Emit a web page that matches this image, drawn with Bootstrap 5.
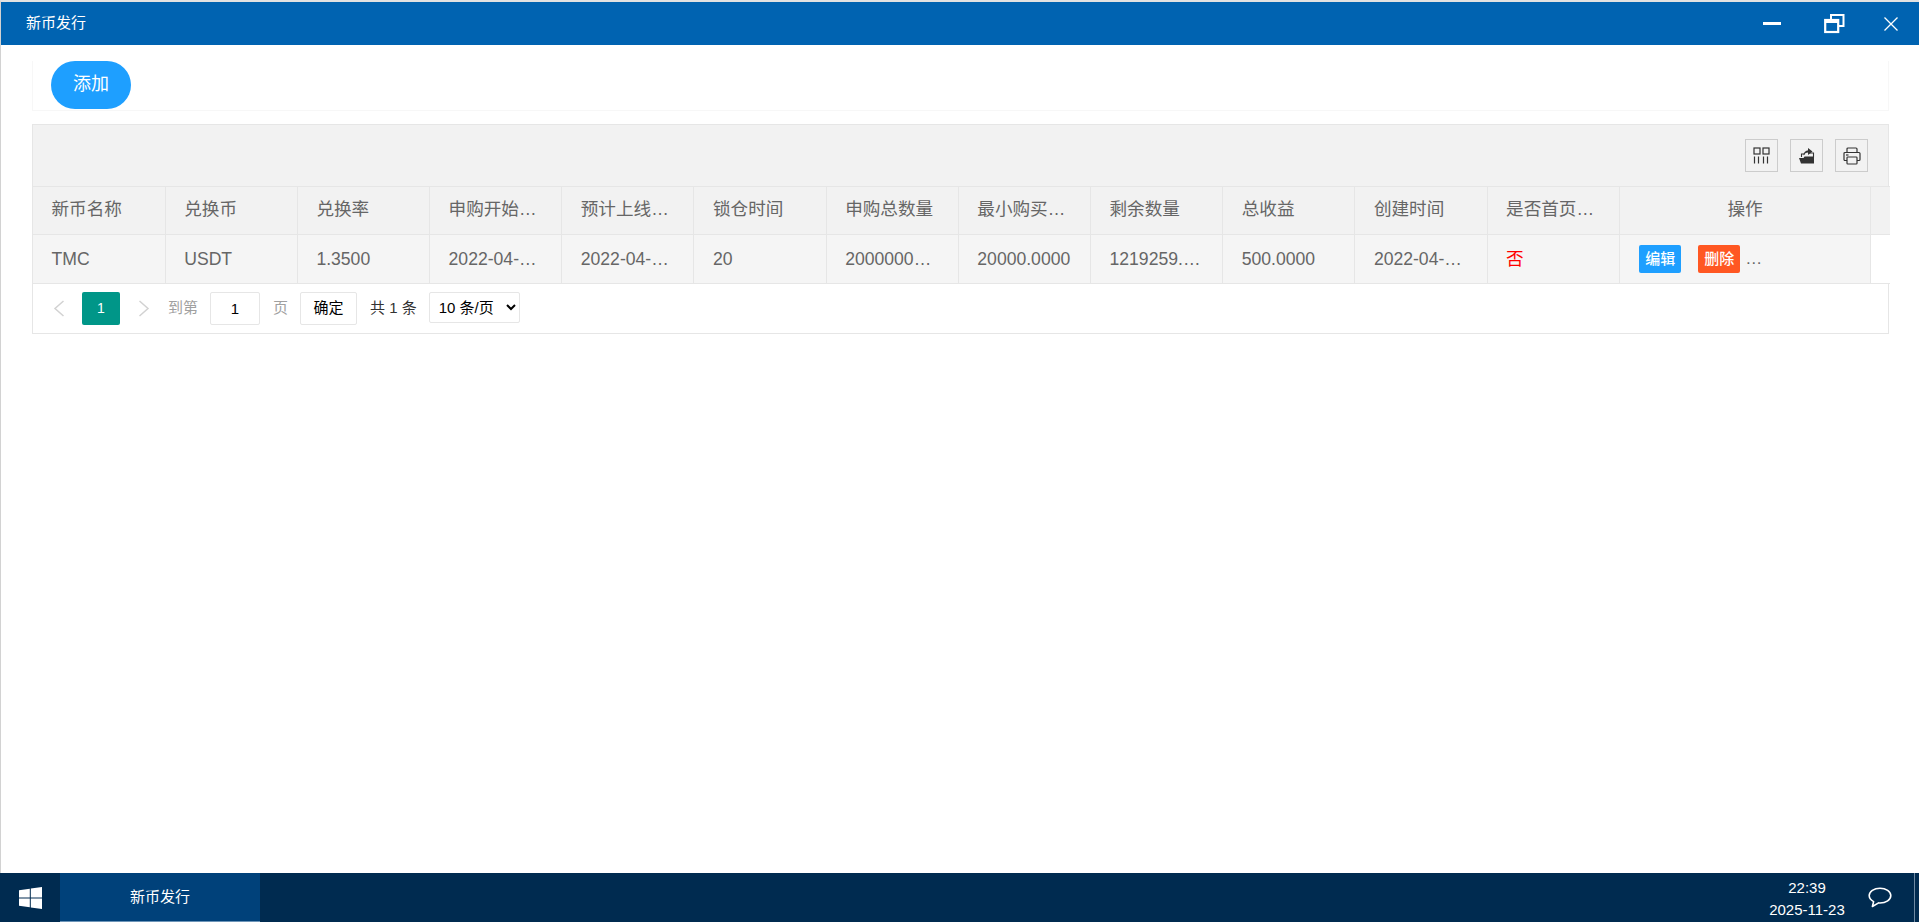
<!DOCTYPE html>
<html lang="zh-CN">
<head>
<meta charset="utf-8">
<title>新币发行</title>
<link rel="stylesheet" href="https://cdn.jsdelivr.net/npm/bootstrap@5.3.0/dist/css/bootstrap.min.css">
<style>
html,body{height:100%;margin:0;overflow:hidden;background:#fff;font-family:"Liberation Sans","Noto Sans CJK SC",sans-serif}
.desk{height:922px}
.win{border-top:2px solid #e2e2e2;border-left:1px solid #d2d2d2;min-height:0}
.win-bar{height:43px;background:#0063b1;color:#fff;font-size:15px;padding-left:25px;flex:none}
.win-ctl{width:18px;height:20px;flex:none}
.win-ctl-restore{width:21px;margin-right:-4px}
.win-ctl-close{width:14px}
.win-ctls{gap:43px;padding-right:21px}
.win-body{padding:16px 30px 0 31px}
.act-panel{height:50px;border:1px solid #f7f7f7;border-top:0;padding-left:18px}
.add-btn{width:80px;height:48px;border:0;border-radius:24px;background:#1e9fff;color:#fff;font-size:18px;padding:0 0 2px}
.grid-box{margin-top:13px;border:1px solid #e6e6e6;background:#fff}
.grid-tools{height:61px;background:#f2f2f2;gap:12px;padding-right:20px}
.tool-btn{width:33px;height:33px;border:1px solid #ccc;flex:none}
.grid-table{table-layout:fixed;width:1857px;margin:0;border-color:#e6e6e6;color:#666;font-size:17.6px}
.grid-table th,.grid-table td{padding:0 18px 0 18.500px;border:1px solid #e6e6e6;white-space:nowrap;overflow:hidden;text-overflow:ellipsis;vertical-align:middle;font-weight:400;box-shadow:none}
.grid-table th:first-child,.grid-table td:first-child{border-left:0}
.grid-table th:last-child,.grid-table td:last-child{border-right:0}
.grid-table th{height:48px;background:#f2f2f2;color:#666;padding-bottom:2px}
.grid-table td{height:49px;background:#f5f5f5;color:#666}
.grid-table td.filler{background:#fff}
.grid-table .c-std{width:132.2px}
.grid-table .c-op{width:251px}
.grid-table .no-flag{color:#f00}
.mini-btn{display:inline-block;height:28px;line-height:28px;padding:0 6px;border-radius:2px;color:#fff;font-size:15px;vertical-align:middle;font-weight:500}
.mini-edit{background:#1e9fff;margin-left:1px}
.mini-del{background:#ff5722;margin-left:17px}
.more-dots{vertical-align:middle;margin-left:5px;font-size:17px;color:#666}
.pager{height:49px;padding-left:20px;font-size:15px;color:#333}
.pg-arrow{width:12px;height:17px;flex:none}
.pg-num{width:38px;height:33px;background:#009688;color:#fff;border-radius:2px;margin:0 18px 0 17px;font-size:14px}
.pg-hint{color:#a0a0a0}
.pg-to{margin-left:18px}
.pg-input{width:50px;height:33px;border:1px solid #e6e6e6;border-radius:2px;text-align:center;margin:0 13px 0 12px;color:#000;font-size:15px;background:#fff;line-height:31px}
.pg-ok{width:57px;height:33px;border:1px solid #e6e6e6;border-radius:2px;margin:0 13px 0 12px;color:#000;background:#fff;font-size:15px;padding:0}
.pg-size{width:91px;height:31px;border:1px solid #e6e6e6;border-radius:2px;margin:0 0 2px 12px;font-size:15px;color:#000;background:#fff;padding:0 0 0 5px;font-family:inherit}
.taskbar{height:49px;background:#002b50;color:#fff;flex:none}
.start-zone{width:60px}
.task-tab{width:200px;background:#00417a;border-bottom:1px solid #6d95b8;font-size:15px}
.clock{font-size:15px;line-height:22px;width:100px;text-align:center;margin-right:11px;padding-top:2px}
.chat-ico{width:24px;height:21px;margin-right:22px;flex:none}
.show-desk{width:1px;height:100%;background:#6f8aa3;margin-right:4px}
</style>
</head>
<body>
<div class="desk d-flex flex-column">
  <div class="win flex-grow-1 d-flex flex-column">
    <div class="win-bar d-flex align-items-center justify-content-between">
      <span>新币发行</span>
      <div class="win-ctls d-flex align-items-center">
        <svg class="win-ctl" viewBox="0 0 18 20"><rect x="0" y="8" width="18" height="3" fill="#fff"/></svg>
        <svg class="win-ctl win-ctl-restore" viewBox="0 0 21 20"><path d="M7 5V1h12.500V12H15" fill="none" stroke="#fff" stroke-width="2"/><rect x="1.200" y="6" width="13" height="12" fill="none" stroke="#fff" stroke-width="2.200"/><rect x="1" y="5.500" width="13.500" height="3.500" fill="#fff"/></svg>
        <svg class="win-ctl win-ctl-close" viewBox="0 0 14 20"><path d="M.5 3.500l13 13M13.500 3.500l-13 13" stroke="#fff" stroke-width="1.300" fill="none"/></svg>
      </div>
    </div>
    <div class="win-body flex-grow-1">
      <div class="act-panel"><button type="button" class="add-btn">添加</button></div>
      <div class="grid-box">
        <div class="grid-tools d-flex align-items-center justify-content-end">
          <div class="tool-btn d-flex align-items-center justify-content-center">
            <svg width="17" height="17" viewBox="0 0 17 17" fill="none" stroke="#333" stroke-width="1.200"><rect x="1" y="1" width="6" height="6"/><rect x="10" y="1" width="6" height="6"/><path d="M1.500 9.500V16.500M5.500 9.500V16.500M10.500 9.500V16.500M14.500 9.500V16.500"/></svg>
          </div>
          <div class="tool-btn d-flex align-items-center justify-content-center">
            <svg width="17" height="17" viewBox="0 0 17 17"><path d="M1 11h4.500l1-1.500H16V16.500H3z" fill="#333"/><path d="M3.500 10V7h3.500M11 6h4.500v4.500" fill="none" stroke="#333" stroke-width="1.100"/><path d="M5.500 8.500C5.500 5 8 3.500 10 3.500V1l4.500 3.500L10 8V5.500C8 5.500 6.500 6.500 5.500 8.500z" fill="#333"/></svg>
          </div>
          <div class="tool-btn d-flex align-items-center justify-content-center">
            <svg width="18" height="18" viewBox="0 0 18 18" fill="none" stroke="#333" stroke-width="1.200"><path d="M4 5.500V2a1 1 0 0 1 1-1h8a1 1 0 0 1 1 1v3.500"/><path d="M4 13.500H2a1 1 0 0 1-1-1V6.500a1 1 0 0 1 1-1h14a1 1 0 0 1 1 1v6a1 1 0 0 1-1 1h-2"/><rect x="4" y="10" width="10" height="7" rx=".8"/><path d="M3 8h2.500"/></svg>
          </div>
        </div>
        <table class="table grid-table">
          <colgroup>
            <col class="c-std"><col class="c-std"><col class="c-std"><col class="c-std"><col class="c-std"><col class="c-std"><col class="c-std"><col class="c-std"><col class="c-std"><col class="c-std"><col class="c-std"><col class="c-std"><col class="c-op"><col>
          </colgroup>
          <thead>
            <tr>
              <th>新币名称</th><th>兑换币</th><th>兑换率</th><th>申购开始时间</th><th>预计上线时间</th><th>锁仓时间</th><th>申购总数量</th><th>最小购买数量</th><th>剩余数量</th><th>总收益</th><th>创建时间</th><th>是否首页显示</th><th class="text-center">操作</th><th></th>
            </tr>
          </thead>
          <tbody>
            <tr>
              <td>TMC</td><td>USDT</td><td>1.3500</td><td>2022-04-01 10:00:00</td><td>2022-04-30 10:00:00</td><td>20</td><td>20000000.0000</td><td>20000.0000</td><td>1219259.0000</td><td>500.0000</td><td>2022-04-01 10:00:00</td><td class="no-flag">否</td>
              <td><span class="mini-btn mini-edit">编辑</span><span class="mini-btn mini-del">删除</span><span class="more-dots">…</span></td>
              <td class="filler"></td>
            </tr>
          </tbody>
        </table>
        <div class="pager d-flex align-items-center">
          <svg class="pg-arrow" viewBox="0 0 12 17"><path d="M10.500 1L2 8.500l8.500 7.500" fill="none" stroke="#d2d2d2" stroke-width="1.500"/></svg>
          <span class="pg-num d-flex align-items-center justify-content-center">1</span>
          <svg class="pg-arrow" viewBox="0 0 12 17"><path d="M1.500 1L10 8.500 1.500 16" fill="none" stroke="#d2d2d2" stroke-width="1.500"/></svg>
          <span class="pg-hint pg-to">到第</span>
          <span class="pg-input">1</span>
          <span class="pg-hint">页</span>
          <button type="button" class="pg-ok">确定</button>
          <span>共 1 条</span>
          <select class="pg-size"><option>10 条/页</option><option>20 条/页</option></select>
        </div>
      </div>
    </div>
  </div>
  <div class="taskbar d-flex align-items-stretch">
    <div class="start-zone d-flex align-items-center justify-content-center">
      <svg width="23" height="22" viewBox="0 0 23 22" fill="#fff"><path d="M0 3.200L10.800 1.700V10.500H0zM11.800 1.500L23 0V10.500H11.800zM0 11.500H10.800V20.300L0 18.800zM11.800 11.500H23V22L11.800 20.500z"/></svg>
    </div>
    <div class="task-tab d-flex align-items-center justify-content-center">新币发行</div>
    <div class="ms-auto d-flex align-items-center h-100">
      <div class="clock"><div>22:39</div><div>2025-11-23</div></div>
      <svg class="chat-ico" viewBox="0 0 24 21"><path d="M12 1.200C6 1.200 1.200 4.500 1.200 8.600c0 2.500 1.800 4.600 4.400 6L4.400 19.500l6.200-3.600c.5 0 .9.100 1.400.100 6 0 10.800-3.300 10.800-7.400S18 1.200 12 1.200z" fill="none" stroke="#fff" stroke-width="1.600" stroke-linejoin="round"/></svg>
      <div class="show-desk"></div>
    </div>
  </div>
</div>
</body>
</html>
